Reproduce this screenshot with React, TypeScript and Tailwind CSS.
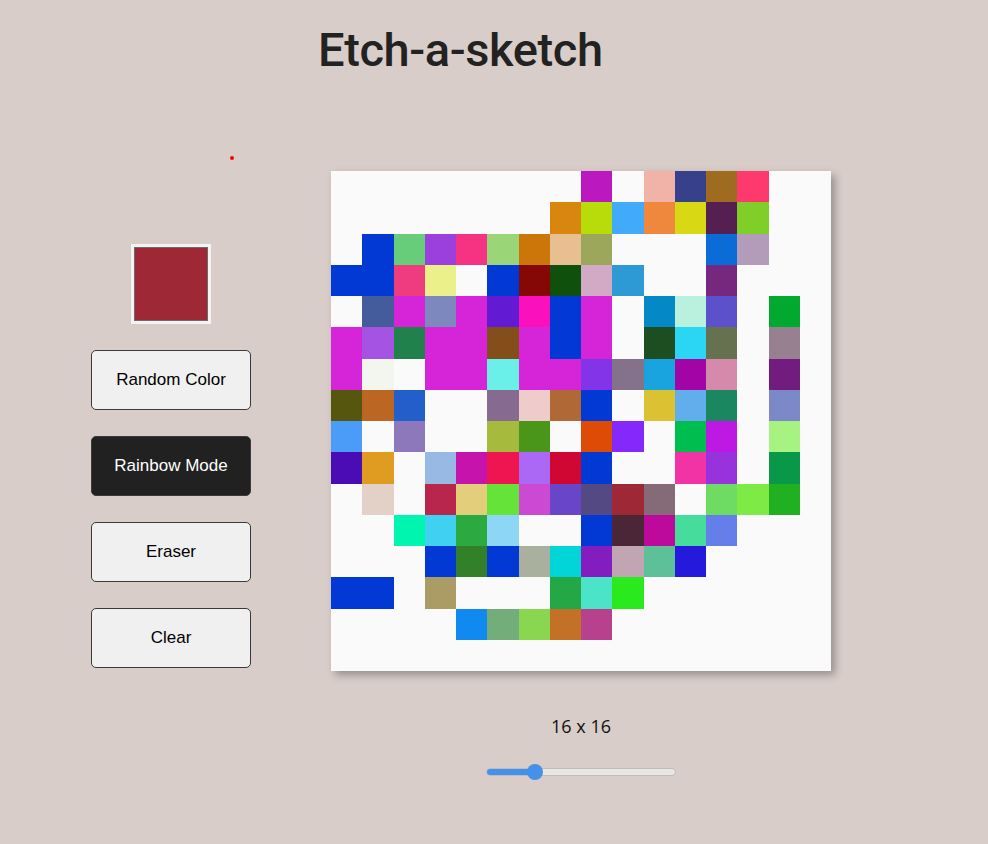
import React from 'react'

const W = ''

const cells: string[][] = [
  [W, W, W, W, W, W, W, W, '#bb18bf', W, '#f1b3a8', '#37408b', '#9f6b21', '#fd396d', W, W],
  [W, W, W, W, W, W, W, '#d9860f', '#b8db0a', '#41aafb', '#ef883c', '#d8d815', '#561f51', '#80cf28', W, W],
  [W, '#0238d4', '#68cd7b', '#9b40dc', '#f53382', '#9ad577', '#cc760a', '#e8bf90', '#9ca75b', W, W, W, '#0b6cd8', '#b39bba', W, W],
  ['#0238d4', '#0238d4', '#ee3c7e', '#ebf08b', W, '#0238d4', '#850806', '#0e500c', '#d3aac6', '#2d9ad5', W, W, '#75287d', W, W, W],
  [W, '#445b9c', '#d624d8', '#7d88bf', '#d624d8', '#621bd2', '#fb10bd', '#0238d4', '#d624d8', W, '#0589c6', '#b9f1de', '#5c50cb', W, '#01aa2f', W],
  ['#d624d8', '#a553e2', '#20814c', '#d624d8', '#d624d8', '#834e19', '#d624d8', '#0238d4', '#d624d8', W, '#1d4e22', '#2ad6f4', '#66714f', W, '#978190', W],
  ['#d624d8', '#f3f6ef', W, '#d624d8', '#d624d8', '#6af0e8', '#d624d8', '#d624d8', '#8434e8', '#84728b', '#19a4df', '#a204a6', '#d58aab', W, '#721c80', W],
  ['#56560f', '#bc6623', '#225fca', W, W, '#876a90', '#f0cbcb', '#b06836', '#0238d4', W, '#dac233', '#62aeec', '#1b8761', W, '#7b89c9', W],
  ['#4a9cf8', W, '#8e78bc', W, W, '#a6bb3d', '#4a961b', W, '#dd4b06', '#8528fb', W, '#00bd50', '#bd19e2', W, '#a7f381', W],
  ['#4a0db5', '#e09c21', W, '#98b9e4', '#c613ac', '#ef1550', '#aa68f4', '#d00633', '#0238d4', W, W, '#f133a5', '#9832dc', W, '#099748', W],
  [W, '#e3d1c7', W, '#b8264d', '#e3cf7b', '#66e338', '#cc49d4', '#6946c8', '#554984', '#9e2836', '#856b78', W, '#6edc62', '#7eea46', '#21b021', W],
  [W, W, '#00f6ae', '#40d0f2', '#2caa40', '#8dd6f6', W, W, '#0238d4', '#4a2637', '#bd0a9c', '#46dd9c', '#667eea', W, W, W],
  [W, W, W, '#0238d4', '#33802b', '#0238d4', '#a9b09e', '#01d5d8', '#841dbf', '#c1a5b2', '#5dc099', '#2519dc', W, W, W, W],
  ['#0238d4', '#0238d4', W, '#ab9c65', W, W, W, '#24a745', '#4ce4c8', '#2ae91c', W, W, W, W, W, W],
  [W, W, W, W, '#1089f0', '#73ae7a', '#89d651', '#c27127', '#b7418d', W, W, W, W, W, W, W],
  [W, W, W, W, W, W, W, W, W, W, W, W, W, W, W, W],
]

interface ButtonProps {
  label: string
  active?: boolean
}

const ModeButton: React.FC<ButtonProps> = ({ label, active }) => {
  return (
    <button
      className={`w-[160px] h-[60px] rounded-[5px] border border-[#3a3a3a] text-[17px] font-['Liberation_Sans',Arial,sans-serif] ${
        active ? 'bg-[#212121] text-white' : 'bg-[#f0f0f0] text-black'
      }`}
    >
      {label}
    </button>
  )
}

const App: React.FC = () => {
  const value = 16
  const pct = (value - 1) / 63

  return (
    <div className="relative min-h-screen bg-[#d8cdc9] font-['Open_Sans',sans-serif]">
      <div className="absolute left-[230px] top-[156px] w-[4px] h-[4px] rounded-full bg-[#f00]" />
      <h1 className="pl-[318px] pt-[20px] h-[171px] text-[47px] leading-[60px] font-medium text-[#222] font-['Roboto',sans-serif] tracking-[-0.4px]">
        Etch-a-sketch
      </h1>
      <div className="flex pl-[91px]">
        <div className="flex flex-col items-center w-[160px] pt-[73px]">
          <div className="w-[80px] h-[80px] bg-[#f3f3f3] p-[3px]">
            <div className="w-full h-full border border-[#6b6b6b] bg-[#9e2836]" />
          </div>
          <div className="flex flex-col gap-[26px] mt-[26px]">
            <ModeButton label="Random Color" />
            <ModeButton label="Rainbow Mode" active />
            <ModeButton label="Eraser" />
            <ModeButton label="Clear" />
          </div>
        </div>
        <div className="ml-[80px] flex flex-col items-center w-[500px]">
          <div className="grid grid-cols-[repeat(16,1fr)] grid-rows-[repeat(16,1fr)] w-[500px] h-[500px] bg-[#fafafa] shadow-[4px_4px_8px_rgba(0,0,0,0.3)]">
            {cells.flat().map((c, i) => (
              <div key={i} style={c ? { backgroundColor: c } : undefined} />
            ))}
          </div>
          <div className="mt-[43px] text-[18px] leading-[24px] text-[#111]">
            {value} x {value}
          </div>
          <div className="relative mt-[26px] w-[190px] h-[16px] flex items-center">
            <div className="w-full h-[8px] rounded-full bg-[#e9e6e4] border border-[#bdbdbd] overflow-hidden">
              <div className="h-full bg-[#4590e8]" style={{ width: `${8 + pct * 174}px` }} />
            </div>
            <div
              className="absolute top-0 w-[16px] h-[16px] rounded-full bg-[#4590e8]"
              style={{ left: `${pct * 174}px` }}
            />
          </div>
        </div>
      </div>
    </div>
  )
}

export default App
